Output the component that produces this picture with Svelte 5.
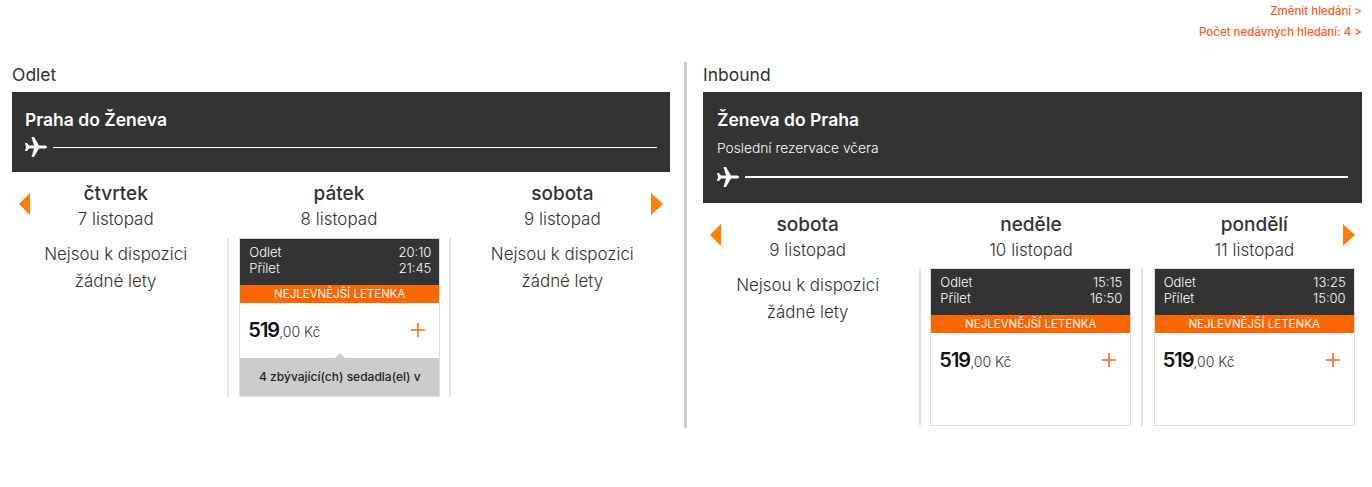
<script lang="ts">
  type Flight = { dep: string; arr: string; seats?: string };
  type Day = { name: string; date: string; flight?: Flight };
  type Leg = { label: string; route: string; note?: string; days: Day[] };

  const legs: Leg[] = [
    {
      label: 'Odlet',
      route: 'Praha do Ženeva',
      days: [
        { name: 'čtvrtek', date: '7 listopad' },
        { name: 'pátek', date: '8 listopad', flight: { dep: '20:10', arr: '21:45', seats: '4 zbývající(ch) sedadla(el) v' } },
        { name: 'sobota', date: '9 listopad' },
      ],
    },
    {
      label: 'Inbound',
      route: 'Ženeva do Praha',
      note: 'Poslední rezervace včera',
      days: [
        { name: 'sobota', date: '9 listopad' },
        { name: 'neděle', date: '10 listopad', flight: { dep: '15:15', arr: '16:50' } },
        { name: 'pondělí', date: '11 listopad', flight: { dep: '13:25', arr: '15:00' } },
      ],
    },
  ];
</script>

<div class="page">
  <div class="links">
    <a href="#change">Změnit hledání &gt;</a>
    <a href="#recent">Počet nedávných hledání: 4 &gt;</a>
  </div>

  <div class="legs">
    {#each legs as leg}
      <section class="leg">
        <h2 class="leg-label">{leg.label}</h2>
        <div class="route">
          <div class="route-title">{leg.route}</div>
          {#if leg.note}
            <div class="route-note">{leg.note}</div>
          {/if}
          <div class="route-line">
            <svg class="plane" width="22" height="20" viewBox="0 0 22 20" aria-hidden="true">
              <path d="M22 10c0-1-1-1.5-3-1.5h-5L9 0H6.5L9 8.5H4L2 6H0l1 4-1 4h2l2-2.5h5L6.5 20H9l5-8.5h5c2 0 3-.5 3-1.5z" fill="#fff" />
            </svg>
            <span class="line"></span>
          </div>
        </div>

        <div class="days">
          <button class="arrow prev" aria-label="Předchozí"></button>
          <button class="arrow next" aria-label="Další"></button>
          {#each leg.days as day}
            <div class="day">
              <div class="day-name">{day.name}</div>
              <div class="day-date">{day.date}</div>
              <div class="day-body">
                {#if day.flight}
                  <div class="card">
                    <div class="times">
                      <div class="time-row"><span>Odlet</span><span>{day.flight.dep}</span></div>
                      <div class="time-row"><span>Přílet</span><span>{day.flight.arr}</span></div>
                    </div>
                    <div class="cheapest">NEJLEVNĚJŠÍ LETENKA</div>
                    <div class="price-row">
                      <span class="price"><b>519</b>,00 Kč</span>
                      <svg width="14" height="14" viewBox="0 0 14 14" aria-hidden="true">
                        <path d="M7 0v14M0 7h14" stroke="#ff6600" stroke-width="1.5" fill="none" />
                      </svg>
                    </div>
                    <div class="seats" class:filled={day.flight.seats}>{day.flight.seats ?? ''}</div>
                  </div>
                {:else}
                  <div class="empty">Nejsou k dispozici<br />žádné lety</div>
                {/if}
              </div>
            </div>
          {/each}
        </div>
      </section>
    {/each}
  </div>
</div>

<style>
  :global(body) {
    margin: 0;
    background: #fff;
    font-family: Inter, "Noto Sans", sans-serif;
    color: #333;
  }

  .page {
    height: 487px;
    overflow: hidden;
    box-sizing: border-box;
    padding: 0 10px 0 12px;
  }

  .links {
    height: 62px;
    box-sizing: border-box;
    padding-top: 1px;
    display: flex;
    flex-direction: column;
    align-items: flex-end;
  }

  .links a {
    color: #ff5a1f;
    text-decoration: none;
    font-size: 11.5px;
    font-weight: 500;
    line-height: 21px;
  }

  .legs {
    display: flex;
    align-items: flex-start;
  }

  .leg {
    width: 658px;
  }

  .leg + .leg {
    width: 659px;
    margin-left: 14px;
    padding-left: 16px;
    border-left: 3px solid #ccc;
    padding-bottom: 2px;
  }

  .leg-label {
    margin: 0;
    height: 30px;
    font-size: 17.5px;
    font-weight: 400;
    line-height: 26px;
  }

  .route {
    background: #333;
    color: #fff;
    padding: 16px 13px 15px;
  }

  .leg + .leg .route {
    padding: 16px 14px;
  }

  .route-title {
    font-size: 17.5px;
    font-weight: 600;
    line-height: 24px;
  }

  .route-note {
    font-size: 13.75px;
    font-weight: 300;
    line-height: 18px;
    margin-top: 7px;
  }

  .route-line {
    display: flex;
    align-items: center;
    gap: 6px;
    margin-top: 5px;
  }

  .leg + .leg .route-line {
    margin-top: 10px;
  }

  .line {
    flex: 1;
    border-top: 1px solid #fff;
  }

  .leg + .leg .line {
    border-top-width: 2px;
  }

  .days {
    position: relative;
    display: grid;
    grid-template-columns: repeat(3, 1fr);
    margin: 0 -4px 0 -8px;
  }

  .leg + .leg .days {
    margin-left: -7px;
  }

  .arrow {
    position: absolute;
    top: 21px;
    width: 0;
    height: 0;
    padding: 0;
    border: 0 solid transparent;
    border-width: 11px 0;
    background: none;
  }

  .arrow.prev {
    left: 15px;
    border-right: 11px solid #ff7f00;
  }

  .leg + .leg .arrow.prev {
    left: 14px;
  }

  .arrow.next {
    right: 11px;
    border-left: 12px solid #ff7f00;
  }

  .day {
    min-width: 0;
    text-align: center;
    padding-top: 9px;
  }

  .day-name {
    font-size: 19px;
    font-weight: 500;
    line-height: 25px;
  }

  .day-date {
    font-size: 17px;
    font-weight: 300;
    line-height: 26px;
  }

  .day-body {
    margin-top: 6px;
    height: 159px;
  }

  .leg + .leg .day-body {
    margin-top: 5px;
    height: 158px;
  }

  .day:has(.card) .day-body {
    border-left: 2px solid #e4e4e4;
    border-right: 2px solid #e4e4e4;
    padding-left: 9px;
  }

  .leg:first-child .day:has(.card) .day-body {
    padding-left: 10px;
  }

  .day:has(.card) + .day:has(.card) .day-body {
    border-left: 0;
    border-right: 0;
    padding-left: 11px;
  }

  .empty {
    font-size: 16.9px;
    font-weight: 300;
    line-height: 27px;
    padding-top: 3px;
  }

  .leg + .leg .empty {
    padding-top: 4px;
  }

  .card {
    box-sizing: border-box;
    width: 201px;
    height: 100%;
    display: flex;
    flex-direction: column;
    border: 1px solid #ddd;
    text-align: left;
  }

  .times {
    background: #333;
    color: #fff;
    font-size: 13px;
    font-weight: 300;
    line-height: 16px;
    padding: 5px 8px 9px 9px;
  }

  .time-row {
    display: flex;
    justify-content: space-between;
  }

  .cheapest {
    background: #ff6600;
    color: #fff;
    font-size: 11.5px;
    line-height: 18px;
    text-align: center;
  }

  .price-row {
    height: 55px;
    display: flex;
    align-items: center;
    justify-content: space-between;
    padding: 0 14px 2px 8px;
    box-sizing: border-box;
  }

  .price {
    font-size: 14px;
    font-weight: 300;
    color: #333;
  }

  .price b {
    font-size: 20px;
    font-weight: 600;
    letter-spacing: -1px;
    color: #111;
  }

  .seats {
    flex: 1;
    position: relative;
    font-size: 12px;
    font-weight: 500;
    color: #222;
    text-align: center;
    line-height: 38px;
  }

  .seats.filled {
    background: #ccc;
  }

  .seats.filled::before {
    content: "";
    position: absolute;
    left: 50%;
    top: -5px;
    margin-left: -5px;
    border: 5px solid transparent;
    border-top: 0;
    border-bottom-color: #ccc;
  }
</style>
